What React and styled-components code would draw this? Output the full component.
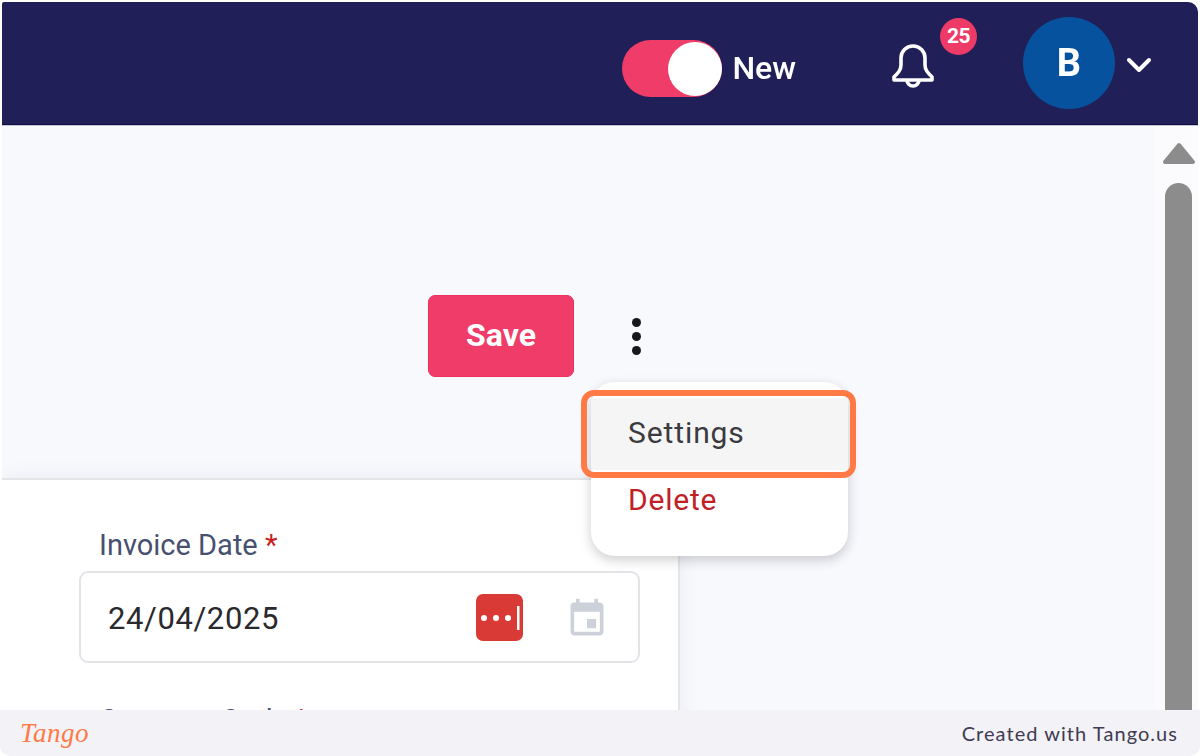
import styled, { createGlobalStyle } from 'styled-components';

const GlobalStyle = createGlobalStyle`
	html, body {
		margin: 0;
		background: #ffffff;
		font-family: Roboto, "Liberation Sans", sans-serif;
	}
`

const Frame = styled.div`
	width: 1200px;
	height: 756px;
	display: flex;
	flex-direction: column;
	overflow: hidden;
	filter: blur(0.45px);
`
const Screen = styled.div`
	flex: 1;
	min-height: 0;
	padding: 2px 2px 0;
	display: flex;
	flex-direction: column;
`
const Header = styled.header`
	position: relative;
	z-index: 3;
	height: 122px;
	flex-shrink: 0;
	background: #211f57;
	border-bottom: 1px solid #0f0c48;
	box-shadow: 0 1px 0 #c5c8d2;
	border-top-right-radius: 10px;
	border-top-left-radius: 2px;
	display: flex;
	align-items: center;
	justify-content: flex-end;
	padding-right: 46px;
`
const ToggleGroup = styled.div`
	display: flex;
	align-items: center;
	margin-top: 11px;
`
const Toggle = styled.div`
	width: 100px;
	height: 57px;
	border-radius: 29px;
	background: #f03c69;
	display: flex;
	align-items: center;
	justify-content: flex-end;
`
const Thumb = styled.div`
	width: 54px;
	height: 54px;
	border-radius: 50%;
	background: #ffffff;
`
const ToggleLabel = styled.span`
	margin: -2px 0 0 10px;
	color: #ffffff;
	font-size: 32px;
	font-weight: 500;
`
const BellWrap = styled.div`
	position: relative;
	width: 44px;
	height: 46px;
	margin-left: 95px;
	margin-top: 5px;
	color: #ffffff;
`
const Badge = styled.span`
	position: absolute;
	left: 49px;
	top: -25px;
	width: 37px;
	height: 37px;
	border-radius: 50%;
	background: #ee3a66;
	color: #ffffff;
	font-size: 21px;
	font-weight: 700;
	letter-spacing: -0.5px;
	display: flex;
	align-items: center;
	justify-content: center;
`
const Avatar = styled.div`
	width: 92px;
	height: 92px;
	margin-left: 88px;
	border-radius: 50%;
	background: #07529f;
	color: #ffffff;
	font-size: 38px;
	font-weight: 700;
	display: flex;
	align-items: center;
	justify-content: center;
`
const Chevron = styled.svg`
	width: 26px;
	height: 16px;
	margin: 3px 0 0 11px;
`
const Main = styled.main`
	flex: 1;
	min-height: 0;
	display: flex;
	overflow: hidden;
`
const Content = styled.div`
	position: relative;
	flex: 1;
	background: #f8f9fd;
`
const Actions = styled.div`
	display: flex;
	align-items: center;
	padding: 170px 0 0 426px;
`
const SaveButton = styled.button`
	width: 146px;
	height: 82px;
	padding: 0 0 3px;
	border: 1px solid #ef2f60;
	border-radius: 7px;
	background: #ef3c68;
	color: #ffffff;
	font-family: inherit;
	font-size: 32px;
	font-weight: 700;
`
const Kebab = styled.div`
	margin-left: 58px;
	display: flex;
	flex-direction: column;
	gap: 5px;
`
const Dot = styled.span`
	width: 9px;
	height: 9px;
	border-radius: 50%;
	background: #17171c;
`
const Menu = styled.div`
	position: absolute;
	left: 589px;
	top: 257px;
	width: 257px;
	height: 174px;
	padding-top: 16px;
	box-sizing: border-box;
	background: #ffffff;
	border-radius: 24px;
	box-shadow: 0 4px 12px rgba(30, 30, 40, 0.22);
	z-index: 2;
`
const MenuItem = styled.div`
	position: relative;
	height: ${(p) => (p.$active ? '72px' : '62px')};
	padding: 0 0 4px 37px;
	box-sizing: border-box;
	display: flex;
	align-items: center;
	background: ${(p) => (p.$active ? '#f5f5f5' : 'transparent')};
	color: ${(p) => (p.$danger ? '#c02126' : '#3b3b3f')};
	font-size: 30px;
	letter-spacing: ${(p) => (p.$danger ? '0.8px' : '0.9px')};
`
const Highlight = styled.span`
	position: absolute;
	top: -8px;
	left: -10px;
	right: -8px;
	bottom: -8px;
	border: 6px solid #ff7a45;
	border-radius: 13px;
`
const Card = styled.section`
	width: 678px;
	margin-top: 101px;
	padding: 48px 0 0 77px;
	box-sizing: border-box;
	height: 300px;
	background: #ffffff;
	border-top: 2px solid #e5e5e8;
	border-right: 2px solid #e5e5e8;
	box-shadow: 0 0 22px rgba(40, 40, 60, 0.06);
`
const FieldLabel = styled.label`
	display: block;
	margin: ${(p) => (p.$next ? '40px' : '0')} 0 9px 20px;
	line-height: 34px;
	color: #47506f;
	font-size: 29px;
`
const Required = styled.span`
	color: #c81e1e;
`
const DateField = styled.div`
	width: 561px;
	height: 92px;
	box-sizing: border-box;
	border: 2px solid #e2e4e7;
	border-radius: 9px;
	padding: 0 32px 0 27px;
	display: flex;
	align-items: center;
	color: #2a2a2e;
	font-size: 31px;
	letter-spacing: 0.6px;
`
const DateValue = styled.span`
	flex: 1;
	padding-top: 2px;
`
const PasswordIcon = styled.svg`
	width: 47px;
	height: 47px;
	margin-right: 42px;
`
const CalendarIcon = styled.svg`
	width: 44px;
	height: 44px;
	color: #cdd2da;
	margin: 4px -3px 0 0;
`
const Scrollbar = styled.aside`
	width: 43px;
	flex-shrink: 0;
	background: #fbfbfd;
	display: flex;
	flex-direction: column;
	align-items: center;
	padding-top: 17px;
	box-sizing: border-box;
`
const ScrollUp = styled.svg`
	width: 34px;
	height: 23px;
	margin-left: 4px;
`
const ScrollThumb = styled.div`
	width: 27px;
	flex: 1;
	margin-top: 18px;
	margin-left: 4px;
	border-radius: 14px 14px 0 0;
	background: #8c8c8c;
`
const Footer = styled.footer`
	height: 46px;
	flex-shrink: 0;
	background: #f3f2f7;
	border-radius: 0 0 10px 10px;
	display: flex;
	align-items: center;
	justify-content: space-between;
	padding: 0 22px 0 20px;
`
const TangoMark = styled.span`
	color: #ff7a45;
	font-family: "Liberation Serif", serif;
	font-style: italic;
	font-size: 27px;
	letter-spacing: 0.5px;
`
const Credit = styled.span`
	color: #3f3b52;
	font-family: Lato, sans-serif;
	font-size: 20px;
	letter-spacing: 1.05px;
`

const App = () => {
	return (
		<>
			<GlobalStyle />
			<Frame>
				<Screen>
					<Header>
						<ToggleGroup>
							<Toggle><Thumb /></Toggle>
							<ToggleLabel>New</ToggleLabel>
						</ToggleGroup>
						<BellWrap>
							<svg width="44" height="46" viewBox="0 0 44 46" fill="none" stroke="currentColor" strokeWidth="3.6" strokeLinejoin="round">
								<path d="M10 22V15a12 12 0 0 1 24 0v7c0 5 3 8 7 12v3H3v-3c4-4 7-7 7-12z" />
								<path d="M16 37a6 6 0 0 0 12 0" />
							</svg>
							<Badge>25</Badge>
						</BellWrap>
						<Avatar>B</Avatar>
						<Chevron viewBox="0 0 26 16" fill="none" stroke="#ffffff" strokeWidth="4" strokeLinecap="round" strokeLinejoin="round">
							<path d="M3 3l10 10L23 3" />
						</Chevron>
					</Header>
					<Main>
						<Content>
							<Actions>
								<SaveButton>Save</SaveButton>
								<Kebab><Dot /><Dot /><Dot /></Kebab>
							</Actions>
							<Menu>
								<MenuItem $active>
									Settings
									<Highlight />
								</MenuItem>
								<MenuItem $danger>Delete</MenuItem>
							</Menu>
							<Card>
								<FieldLabel>Invoice Date <Required>*</Required></FieldLabel>
								<DateField>
									<DateValue>24/04/2025</DateValue>
									<PasswordIcon viewBox="0 0 47 47">
										<rect width="47" height="47" rx="7" fill="#d93a35" />
										<circle cx="8" cy="24" r="3" fill="#fff" />
										<circle cx="20" cy="24" r="3" fill="#fff" />
										<circle cx="32" cy="24" r="3" fill="#fff" />
										<rect x="41" y="12" width="2.5" height="24" fill="#fff" />
									</PasswordIcon>
									<CalendarIcon viewBox="0 0 24 24" fill="currentColor">
										<path d="M17 12h-5v5h5v-5zM16 1v2H8V1H6v2H5c-1.11 0-1.99.9-1.99 2L3 19c0 1.1.89 2 2 2h14c1.1 0 2-.9 2-2V5c0-1.1-.9-2-2-2h-1V1h-2zm3 18H5V8h14v11z" />
									</CalendarIcon>
								</DateField>
								<FieldLabel $next>Currency Code <Required>*</Required></FieldLabel>
							</Card>
						</Content>
						<Scrollbar>
							<ScrollUp viewBox="0 0 34 23">
								<path d="M17 3L31 20H3z" fill="#8c8c8c" stroke="#8c8c8c" strokeWidth="4" strokeLinejoin="round" />
							</ScrollUp>
							<ScrollThumb />
						</Scrollbar>
					</Main>
				</Screen>
				<Footer>
					<TangoMark>Tango</TangoMark>
					<Credit>Created with Tango.us</Credit>
				</Footer>
			</Frame>
		</>
	);
}

export default App;
